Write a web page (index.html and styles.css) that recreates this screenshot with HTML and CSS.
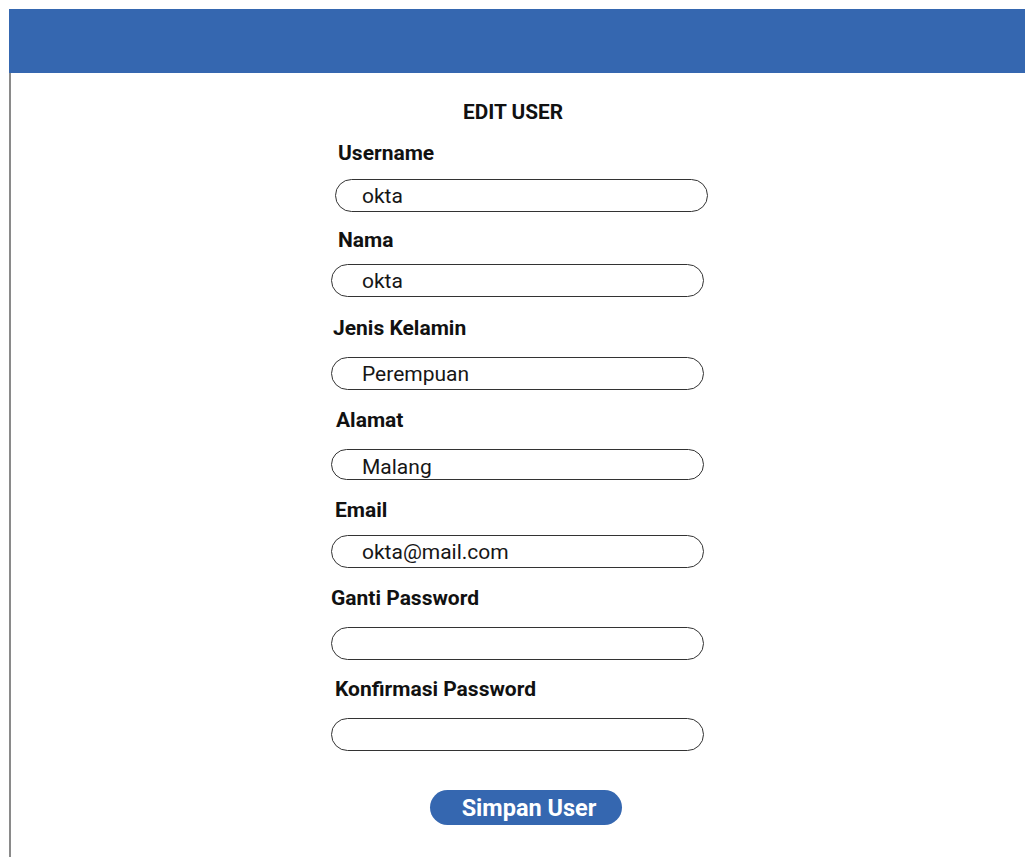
FILE: index.html
```html
<!DOCTYPE html>
<html lang="id">
<head>
<meta charset="utf-8">
<title>Edit User</title>
<link rel="stylesheet" href="styles.css">
</head>
<body>
<div class="frame">
  <header class="topbar"></header>
  <main class="content">
    <form class="user-form">
      <h1 class="form-title">EDIT USER</h1>

      <label class="field-label lbl-username">Username</label>
      <div class="field-input in-username">okta</div>

      <label class="field-label lbl-nama">Nama</label>
      <div class="field-input in-nama">okta</div>

      <label class="field-label lbl-gender">Jenis Kelamin</label>
      <div class="field-input in-gender">Perempuan</div>

      <label class="field-label lbl-alamat">Alamat</label>
      <div class="field-input in-alamat">Malang</div>

      <label class="field-label lbl-email">Email</label>
      <div class="field-input in-email">okta@mail.com</div>

      <label class="field-label lbl-pass">Ganti Password</label>
      <div class="field-input in-pass"></div>

      <label class="field-label lbl-confirm">Konfirmasi Password</label>
      <div class="field-input in-confirm"></div>

      <div class="actions">
        <button type="button" class="btn-save">Simpan User</button>
      </div>
    </form>
  </main>
</div>
</body>
</html>
```

FILE: styles.css
```css
html, body {
  margin: 0;
  padding: 0;
  background: #ffffff;
}

body {
  font-family: Roboto, "Liberation Sans", Arial, sans-serif;
  color: #111;
}

.frame {
  padding: 9px 0 0 9px;
  min-height: 848px;
  display: flex;
  flex-direction: column;
}

.topbar {
  height: 64px;
  background: #3567b0;
}

.content {
  flex: 1;
  border-left: 2px solid #8a8a8a;
}

.user-form {
  display: flex;
  flex-direction: column;
  align-items: flex-start;
  margin-left: 320px;
  width: 374px;
}

.form-title {
  align-self: center;
  margin: 27px 0 0 0;
  padding-right: 10px;
  font-size: 20.8px;
  line-height: 24px;
  font-weight: 700;
  color: #111;
}

.field-label {
  font-size: 21px;
  line-height: 24px;
  font-weight: 700;
  color: #111;
}

.field-input {
  box-sizing: border-box;
  width: 373px;
  height: 33px;
  border: 1.5px solid #333;
  border-radius: 17px;
  padding-left: 30px;
  font-size: 21px;
  line-height: 32px;
  color: #161616;
}

/* vertical rhythm of each field */
.lbl-username { margin: 17px 0 0 7px; }
.in-username  { margin: 14px 0 0 4px; padding-left: 26px; }

.lbl-nama     { margin: 16px 0 0 7px; }
.in-nama      { margin: 12px 0 0 0; }

.lbl-gender   { margin: 19px 0 0 2px; }
.in-gender    { margin: 17px 0 0 0; }

.lbl-alamat   { margin: 18px 0 0 5px; }
.in-alamat    { margin: 17px 0 0 0; height: 31px; line-height: 34px; }

.lbl-email    { margin: 18px 0 0 4px; }
.in-email     { margin: 13px 0 0 0; }

.lbl-pass     { margin: 18px 0 0 0; }
.in-pass      { margin: 17px 0 0 0; }

.lbl-confirm  { margin: 17px 0 0 4px; }
.in-confirm   { margin: 17px 0 0 0; }

.actions {
  align-self: stretch;
  display: flex;
  justify-content: flex-start;
  margin-top: 39px;
  padding-left: 99px;
}

.btn-save {
  width: 192px;
  height: 35px;
  border: none;
  border-radius: 18px;
  background: #3567b0;
  color: #ffffff;
  font-family: Roboto, "Liberation Sans", Arial, sans-serif;
  font-size: 23.5px;
  font-weight: 700;
  padding: 0;
  text-indent: 6px;
  cursor: pointer;
}
```
